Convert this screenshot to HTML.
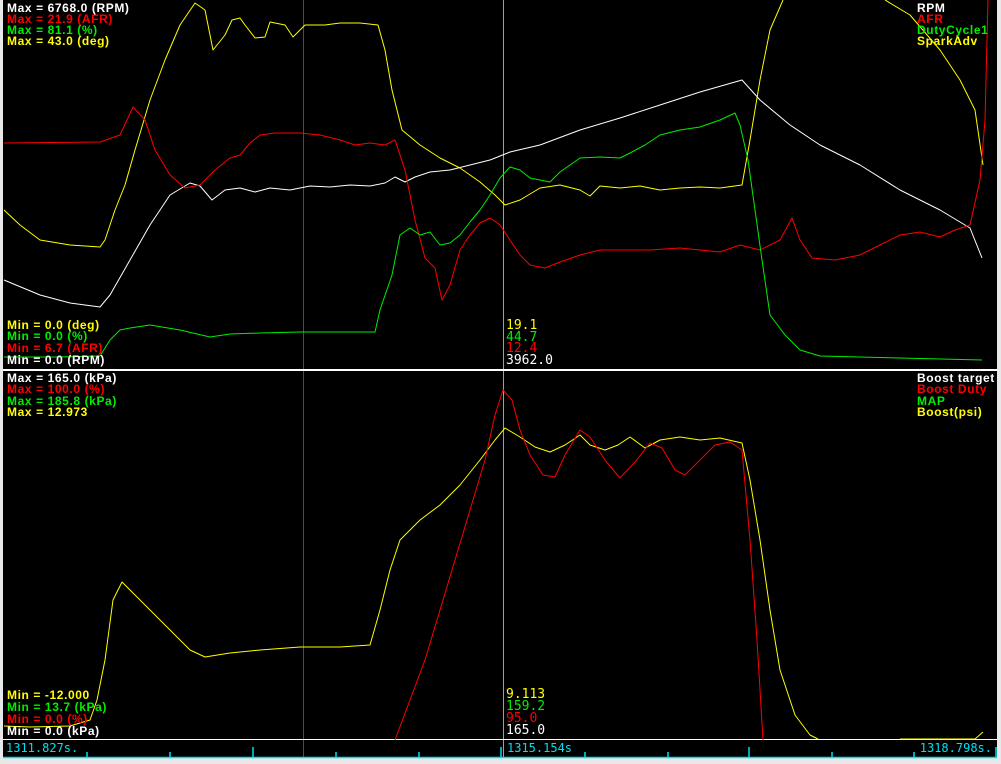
<!DOCTYPE html>
<html><head><meta charset="utf-8"><style>
html,body{margin:0;padding:0;background:#e8e8e8;width:1001px;height:764px;overflow:hidden}
svg{position:absolute;left:0;top:0}
.b{font-family:"Liberation Sans",sans-serif;font-weight:bold;font-size:12px;letter-spacing:0.6px}
.r{font-family:"DejaVu Sans Mono","Liberation Mono",monospace;font-size:13px}
.t{font-family:"DejaVu Sans Mono","Liberation Mono",monospace;font-size:12px}
</style></head><body>
<svg width="1001" height="764" xmlns="http://www.w3.org/2000/svg">
<rect x="3" y="0" width="994" height="758" fill="#000"/>
<line x1="303.5" y1="0" x2="303.5" y2="758" stroke="#ff0000" stroke-width="1"/>
<line x1="503.5" y1="0" x2="503.5" y2="758" stroke="#00e0f0" stroke-width="1"/>
<line x1="3" y1="370" x2="997" y2="370" stroke="#fff" stroke-width="2"/>
<line x1="3" y1="739.5" x2="997" y2="739.5" stroke="#fff" stroke-width="1"/>
<line x1="3" y1="757.5" x2="997" y2="757.5" stroke="#00e0f0" stroke-width="1.5"/>
<g fill="none" stroke-width="1" stroke-linejoin="round">
<polyline stroke="#fff" points="4,280 40,295 70,303 100,307 110,295 130,260 150,225 170,195 190,183 200,186 212,200 225,190 240,188 255,192 270,188 290,190 310,186 330,187 350,185 370,186 385,183 395,177 405,182 415,177 430,172 450,170 470,165 490,160 510,152 540,145 580,130 620,118 660,105 700,92 742,80 760,100 790,125 820,145 860,165 900,190 940,210 970,228 982,258"/>
<polyline stroke="#ffff00" points="4,210 20,225 40,240 70,245 100,247 105,240 115,210 125,185 135,150 150,100 165,60 180,25 195,3 205,10 213,50 225,35 232,20 240,18 245,25 255,38 265,37 270,22 285,25 293,37 305,25 325,25 340,23 360,23 378,25 385,50 392,90 402,130 420,145 440,158 460,168 480,182 495,195 505,205 520,200 540,188 560,185 580,190 590,196 600,186 620,188 640,186 660,190 680,188 700,187 720,188 742,185 750,140 760,80 770,30 783,0"/>
<polyline stroke="#ffff00" points="885,0 910,15 940,50 960,80 975,110 983,165"/>
<polyline stroke="#ff0000" points="4,143 100,142 120,135 133,107 145,120 155,150 170,175 185,188 200,185 215,170 230,158 240,155 250,143 260,135 275,133 300,133 320,135 340,140 355,145 370,143 385,145 395,140 405,170 415,220 425,258 435,268 442,300 450,285 460,250 470,235 480,223 490,218 500,225 510,240 520,255 530,265 545,268 560,262 580,255 600,250 620,250 650,250 680,248 700,250 720,252 740,245 760,250 780,240 792,218 800,240 812,258 835,260 860,255 880,245 900,235 920,232 940,237 955,230 970,225 980,180 985,120 988,0"/>
<polyline stroke="#00ee00" points="4,357 60,357 100,356 110,340 120,330 130,328 150,325 180,330 210,337 230,334 260,333 300,332 330,332 375,332 380,310 392,275 400,235 410,228 420,235 430,232 440,245 450,243 460,235 470,222 480,210 490,195 500,178 510,167 520,170 530,178 550,182 560,172 580,158 600,157 620,158 630,153 645,145 660,135 680,130 700,127 720,120 735,113 740,125 748,160 755,210 762,260 770,315 785,335 800,350 820,356 900,358 982,360"/>
<polyline stroke="#ffff00" points="4,726 30,727 70,726 90,720 97,700 105,660 113,600 122,582 135,595 150,610 170,630 190,650 205,657 230,653 260,650 300,647 340,647 370,645 380,610 390,570 400,540 420,520 440,505 460,485 480,460 495,440 505,428 520,437 535,447 550,452 565,445 580,435 590,445 605,450 618,445 630,437 645,448 660,440 680,437 700,440 720,438 742,443 750,480 760,540 770,610 780,670 795,715 810,735 818,739"/>
<polyline stroke="#ffff00" points="900,739 975,739 983,732"/>
<polyline stroke="#ff0000" points="395,740 410,700 425,660 440,610 455,560 470,510 485,460 495,415 503,390 512,400 520,430 530,455 543,475 555,477 565,455 580,430 590,437 605,460 620,478 635,462 650,443 662,448 675,470 685,475 700,460 715,445 730,442 742,450 750,540 757,640 763,740"/>
</g>
<g stroke="#00e0f0" stroke-width="1.5">
<line x1="87" y1="752" x2="87" y2="757"/><line x1="170" y1="752" x2="170" y2="757"/><line x1="253" y1="747" x2="253" y2="757"/>
<line x1="336" y1="752" x2="336" y2="757"/><line x1="419" y1="752" x2="419" y2="757"/><line x1="501" y1="747" x2="501" y2="757"/>
<line x1="585" y1="752" x2="585" y2="757"/><line x1="668" y1="752" x2="668" y2="757"/><line x1="749" y1="747" x2="749" y2="757"/>
<line x1="832" y1="752" x2="832" y2="757"/><line x1="914" y1="752" x2="914" y2="757"/><line x1="996" y1="747" x2="996" y2="757"/>
</g>
<g class="b">
<text x="7" y="12" fill="#fff">Max = 6768.0 (RPM)</text>
<text x="7" y="23" fill="#ff0000">Max = 21.9 (AFR)</text>
<text x="7" y="34" fill="#00ee00">Max = 81.1 (%)</text>
<text x="7" y="45" fill="#ffff00">Max = 43.0 (deg)</text>
<text x="7" y="329" fill="#ffff00">Min = 0.0 (deg)</text>
<text x="7" y="340" fill="#00ee00">Min = 0.0 (%)</text>
<text x="7" y="352" fill="#ff0000">Min = 6.7 (AFR)</text>
<text x="7" y="364" fill="#fff">Min = 0.0 (RPM)</text>
<text x="7" y="382" fill="#fff">Max = 165.0 (kPa)</text>
<text x="7" y="393" fill="#ff0000">Max = 100.0 (%)</text>
<text x="7" y="405" fill="#00ee00">Max = 185.8 (kPa)</text>
<text x="7" y="416" fill="#ffff00">Max = 12.973</text>
<text x="7" y="699" fill="#ffff00">Min = -12.000</text>
<text x="7" y="711" fill="#00ee00">Min = 13.7 (kPa)</text>
<text x="7" y="723" fill="#ff0000">Min = 0.0 (%)</text>
<text x="7" y="735" fill="#fff">Min = 0.0 (kPa)</text>
<text x="917" y="12" fill="#fff">RPM</text>
<text x="917" y="23" fill="#ff0000">AFR</text>
<text x="917" y="34" fill="#00ee00">DutyCycle1</text>
<text x="917" y="45" fill="#ffff00">SparkAdv</text>
<text x="917" y="382" fill="#fff">Boost target</text>
<text x="917" y="393" fill="#ff0000">Boost Duty</text>
<text x="917" y="405" fill="#00ee00">MAP</text>
<text x="917" y="416" fill="#ffff00">Boost(psi)</text>
</g>
<g class="r">
<text x="506" y="329" fill="#ffff00">19.1</text>
<text x="506" y="341" fill="#00ee00">44.7</text>
<text x="506" y="352" fill="#ff0000">12.4</text>
<text x="506" y="364" fill="#fff">3962.0</text>
<text x="506" y="698" fill="#ffff00">9.113</text>
<text x="506" y="710" fill="#00ee00">159.2</text>
<text x="506" y="722" fill="#ff0000">95.0</text>
<text x="506" y="734" fill="#fff">165.0</text>
</g>
<g class="t">
<text x="6" y="752" fill="#00e0f0">1311.827s.</text>
<text x="507" y="752" fill="#00e0f0">1315.154s</text>
<text x="992" y="752" fill="#00e0f0" text-anchor="end">1318.798s.</text>
</g>
</svg>
</body></html>
